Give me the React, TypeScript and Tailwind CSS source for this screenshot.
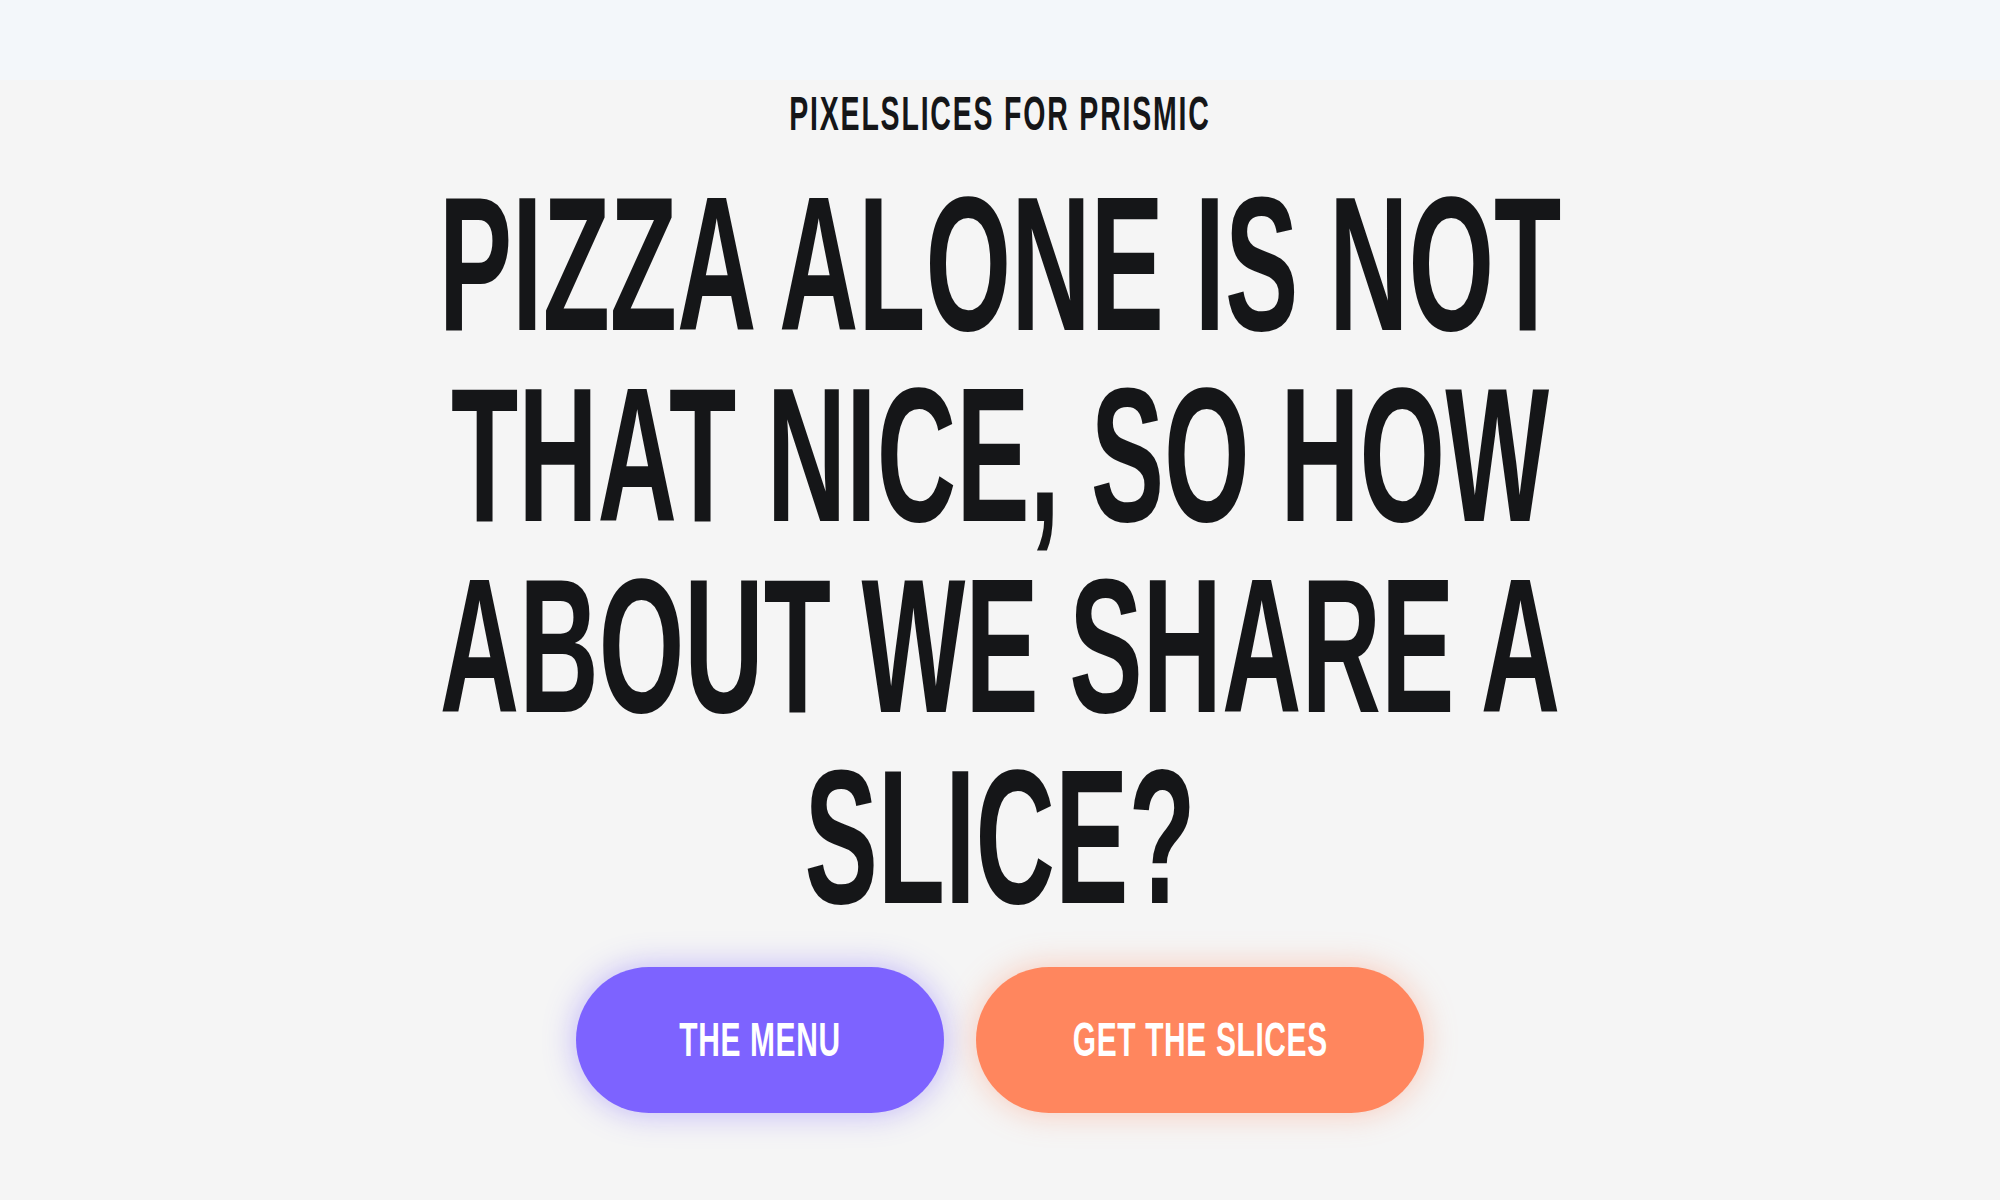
import React from 'react';

const headline = ['PIZZA ALONE IS NOT', 'THAT NICE, SO HOW', 'ABOUT WE SHARE A', 'SLICE?'];

const App: React.FC = () => {
  return (
    <div className="min-h-screen bg-[#f5f5f5] font-['Liberation_Sans',Arial,sans-serif] font-bold text-[#151618]">
      {/* Top bar */}
      <header className="h-20 bg-[#f3f7fa]" />

      {/* Hero */}
      <section className="flex flex-col items-center pt-[10px] pb-24">
        <p className="w-full text-center whitespace-nowrap text-[47.5px] leading-none tracking-[3px] scale-x-[0.6]">
          PIXELSLICES FOR PRISMIC
        </p>

        <h1 className="mt-[30px] w-full text-center whitespace-nowrap text-[191px] leading-[191px] scale-x-[0.576]">
          {headline.map((line) => (
            <div key={line}>{line}</div>
          ))}
        </h1>

        <div className="mt-[35px] flex items-center gap-8">
          <button className="w-[368px] h-[146px] flex items-center justify-center rounded-full bg-[#7d63ff] text-white shadow-[0_0_32px_rgba(125,99,255,0.45)]">
            <span className="whitespace-nowrap text-[47.5px] leading-none tracking-[1px] scale-x-[0.63]">THE MENU</span>
          </button>
          <button className="w-[448px] h-[146px] flex items-center justify-center rounded-full bg-[#ff865e] text-white shadow-[0_0_32px_rgba(255,134,94,0.4)]">
            <span className="whitespace-nowrap text-[47.5px] leading-none tracking-[1px] scale-x-[0.63]">GET THE SLICES</span>
          </button>
        </div>
      </section>
    </div>
  );
};

export default App;
